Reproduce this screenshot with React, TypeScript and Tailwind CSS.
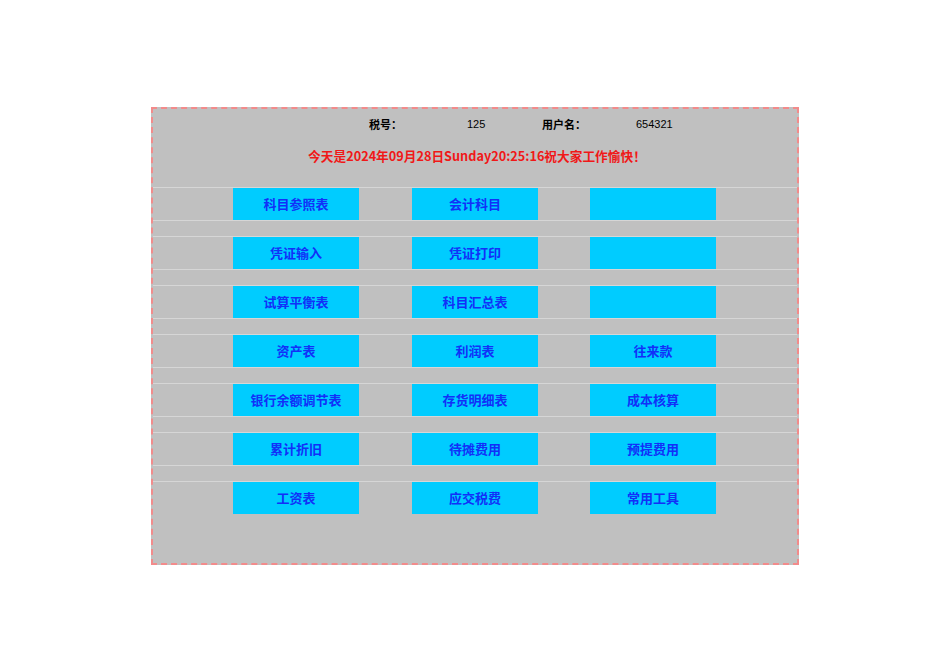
const rows: string[][] = [
  ['科目参照表', '会计科目', ''],
  ['凭证输入', '凭证打印', ''],
  ['试算平衡表', '科目汇总表', ''],
  ['资产表', '利润表', '往来款'],
  ['银行余额调节表', '存货明细表', '成本核算'],
  ['累计折旧', '待摊费用', '预提费用'],
  ['工资表', '应交税费', '常用工具'],
]

const cjk = { fontFamily: '"Noto Sans CJK SC", "Liberation Sans", sans-serif' }
const latin = { fontFamily: '"Liberation Sans", sans-serif' }

function App() {
  return (
    <div className="w-[950px] h-[672px] bg-white pt-[107px] pl-[151px]" style={cjk}>
      <div className="w-[648px] h-[458px] bg-[#c0c0c0] border-2 border-dashed border-[#f28b8b] flex flex-col">
        {/* header */}
        <div className="h-[78px] flex flex-col">
          <div className="flex items-center h-[30px] pt-[1px] pl-[216px] text-[11px] text-black">
            <span className="w-[98px] font-bold">税号：</span>
            <span className="w-[75px]" style={latin}>125</span>
            <span className="w-[94px] font-bold">用户名：</span>
            <span style={latin}>654321</span>
          </div>
          <div className="h-[34px] flex items-center justify-center text-[12.7px] font-bold text-[#f01818] pl-[4px]">
            今天是2024年09月28日Sunday20:25:16祝大家工作愉快！
          </div>
        </div>

        {rows.map((row, i) => (
          <div key={i}>
            <div className="h-[33px] border-t border-[#d6d6d6] flex pl-[80px]">
              {row.map((label, j) => (
                <div
                  key={j}
                  className={`w-[126px] h-full bg-[#00ccff] flex items-center justify-center text-[13px] font-bold text-[#1230f8] ${j === 1 ? 'ml-[53px]' : j === 2 ? 'ml-[52px]' : ''}`}
                >
                  {label}
                </div>
              ))}
            </div>
            {i < rows.length - 1 && <div className="h-[16px] border-t border-[#d6d6d6]" />}
          </div>
        ))}
      </div>
    </div>
  )
}

export default App
